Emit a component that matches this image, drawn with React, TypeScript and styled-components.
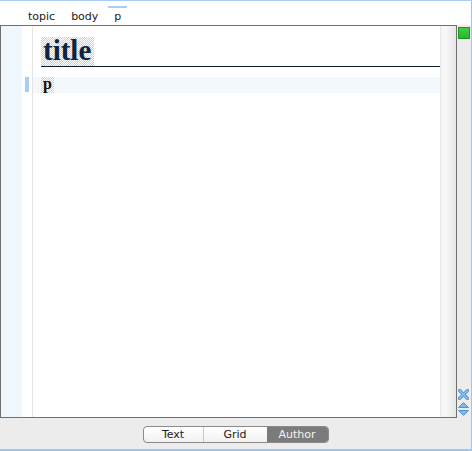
import React from "react";
import styled, { createGlobalStyle } from "styled-components";

const Global = createGlobalStyle`
  html, body { margin: 0; padding: 0; background: #ffffff; overflow: hidden; }
  * { box-sizing: border-box; }
`;

const Frame = styled.div`
  width: 472px;
  height: 451px;
  display: flex;
  flex-direction: column;
  background: #ececec;
  border-top: 1px solid #a9cdf5;
  border-right: 1px solid #9ec5ea;
  border-bottom: 2px solid #9ec5ea;
`;

const Breadcrumb = styled.div`
  height: 24px;
  background: #ffffff;
  display: flex;
  align-items: flex-start;
  padding-left: 22px;
  gap: 4px;
`;

const Crumb = styled.div<{ $active?: boolean }>`
  display: flex;
  flex-direction: column;
  padding: 5px 6px 0;
  font-family: "DejaVu Sans", sans-serif;
  font-size: 11px;
  line-height: 13px;
  color: #1a1a1a;
  &::before {
    content: "";
    display: block;
    height: 2px;
    margin: 0 -6px 2px;
    background: ${(p) => (p.$active ? "#a9cdf5" : "transparent")};
  }
`;

const Main = styled.div`
  flex: 1;
  display: flex;
  min-height: 0;
`;

const Editor = styled.div`
  width: 457px;
  border: 1px solid #6f6f6f;
  background: #ffffff;
  display: flex;
`;

const Gutter = styled.div`
  width: 21px;
  background: #eef6fe;
`;

const MarginCol = styled.div`
  width: 11px;
  border-right: 1px solid #e4e4e4;
  display: flex;
  flex-direction: column;
`;

const Marker = styled.div`
  margin-top: 51px;
  margin-left: 3px;
  width: 4px;
  height: 15px;
  background: #a9cdf7;
`;

const Content = styled.div`
  flex: 1;
  padding: 11px 0 0 8px;
  display: flex;
  flex-direction: column;
`;

const checker = `
  background-color: #ffffff;
  background-image: repeating-conic-gradient(#d0d0d0 0 25%, #ffffff 0 50%);
  background-size: 2px 2px;
`;

const TitleBox = styled.div`
  border-bottom: 1px solid #0c1e36;
  display: flex;
`;

const TitleText = styled.span`
  ${checker}
  display: inline-block;
  height: 29px;
  padding: 0 3px 0 2px;
  font-family: "Liberation Serif", "Times New Roman", serif;
  font-weight: bold;
  font-size: 29px;
  line-height: 27px;
  color: #0c2442;
`;

const ParaRow = styled.div`
  margin: 10px 0 0 -8px;
  padding-left: 8px;
  height: 16px;
  background: #f3f8fd;
  display: flex;
`;

const ParaText = styled.span`
  ${checker}
  display: inline-block;
  height: 16px;
  padding: 0 2px;
  font-family: "Liberation Serif", "Times New Roman", serif;
  font-weight: bold;
  font-size: 16px;
  line-height: 13px;
  color: #111111;
`;

const ScrollStrip = styled.div`
  width: 16px;
  background: linear-gradient(to right, #e4e4e4 0, #f8f8f8 2px, #f6f6f6 40%, #e6e6e6 100%);
`;

const SideCol = styled.div`
  flex: 1;
  display: flex;
  flex-direction: column;
  justify-content: space-between;
  padding: 2px 0 1px 1px;
`;

const GreenBox = styled.div`
  width: 12px;
  height: 12px;
  background: linear-gradient(#3fd03f, #2cb52e);
  border: 1px solid #1f8f25;
`;

const SideIcons = styled.div`
  display: flex;
  flex-direction: column;
  gap: 2px;
`;

const BottomBar = styled.div`
  height: 31px;
  display: flex;
  justify-content: center;
  align-items: flex-start;
  padding-top: 8px;
`;

const Segmented = styled.div`
  display: flex;
  height: 17px;
  border: 1px solid #8a8a8a;
  border-radius: 4px;
  overflow: hidden;
  background: linear-gradient(#ffffff, #f1f1f1);
`;

const Segment = styled.div<{ $w: number; $active?: boolean; $divider?: boolean }>`
  width: ${(p) => p.$w}px;
  display: flex;
  align-items: center;
  justify-content: center;
  font-family: "DejaVu Sans", sans-serif;
  font-size: 11px;
  color: ${(p) => (p.$active ? "#f4f4f4" : "#1a1a1a")};
  background: ${(p) => (p.$active ? "#7b7b7b" : "transparent")};
  border-right: ${(p) => (p.$divider ? "1px solid #c9c9c9" : "none")};
`;

const CloseIcon = () => (
  <svg width="11" height="11" viewBox="0 0 11 11">
    <path d="M1.5 1.5 L9.5 9.5 M9.5 1.5 L1.5 9.5" stroke="#4d94d8" strokeWidth="3.2" strokeLinecap="square" />
    <path d="M1.5 1.5 L9.5 9.5 M9.5 1.5 L1.5 9.5" stroke="#8cc4f2" strokeWidth="1.4" strokeLinecap="square" />
  </svg>
);

const UpDownIcon = () => (
  <svg width="11" height="15" viewBox="0 0 11 15">
    <path d="M5.5 0.5 L10.5 5.5 L0.5 5.5 Z" fill="#7ab8ee" stroke="#4d94d8" strokeWidth="1" />
    <path d="M0.5 8.5 L10.5 8.5 L5.5 13.5 Z" fill="#7ab8ee" stroke="#4d94d8" strokeWidth="1" />
  </svg>
);

export default function App() {
  return (
    <>
      <Global />
      <Frame>
        <Breadcrumb>
          <Crumb>topic</Crumb>
          <Crumb>body</Crumb>
          <Crumb $active>p</Crumb>
        </Breadcrumb>
        <Main>
          <Editor>
            <Gutter />
            <MarginCol>
              <Marker />
            </MarginCol>
            <Content>
              <TitleBox>
                <TitleText>title</TitleText>
              </TitleBox>
              <ParaRow>
                <ParaText>p</ParaText>
              </ParaRow>
            </Content>
            <ScrollStrip />
          </Editor>
          <SideCol>
            <GreenBox />
            <SideIcons>
              <CloseIcon />
              <UpDownIcon />
            </SideIcons>
          </SideCol>
        </Main>
        <BottomBar>
          <Segmented>
            <Segment $w={60} $divider>Text</Segment>
            <Segment $w={63}>Grid</Segment>
            <Segment $w={61} $active>Author</Segment>
          </Segmented>
        </BottomBar>
      </Frame>
    </>
  );
}
